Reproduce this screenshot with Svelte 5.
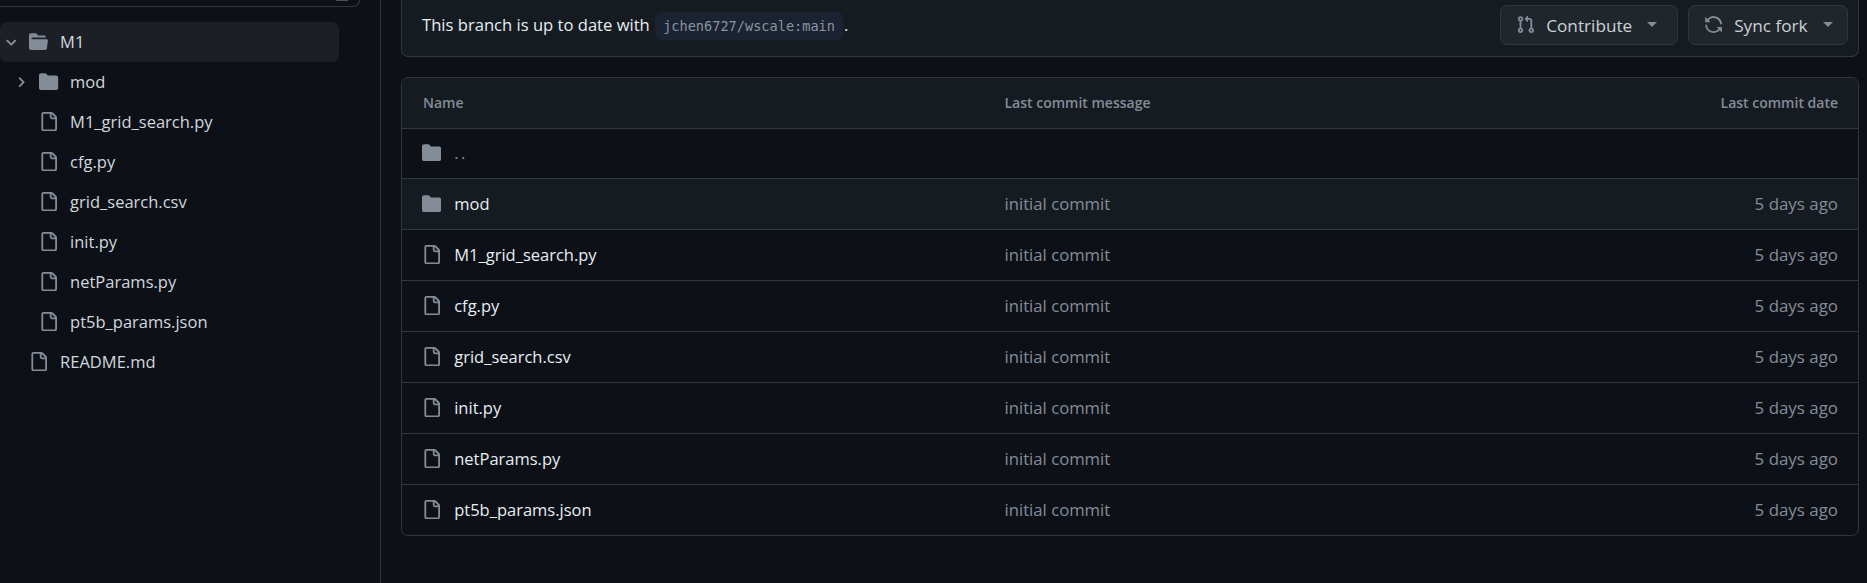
<script>
	const tree = [
		{ name: 'mod', type: 'dir' },
		{ name: 'M1_grid_search.py', type: 'file' },
		{ name: 'cfg.py', type: 'file' },
		{ name: 'grid_search.csv', type: 'file' },
		{ name: 'init.py', type: 'file' },
		{ name: 'netParams.py', type: 'file' },
		{ name: 'pt5b_params.json', type: 'file' }
	];

	const filePath =
		'M2 1.75C2 .784 2.784 0 3.75 0h6.586c.464 0 .909.184 1.237.513l2.914 2.914c.329.328.513.773.513 1.237v9.586A1.75 1.75 0 0 1 13.25 16h-9.5A1.75 1.75 0 0 1 2 14.25Zm1.75-.25a.25.25 0 0 0-.25.25v12.5c0 .138.112.25.25.25h9.5a.25.25 0 0 0 .25-.25V6h-2.75A1.75 1.75 0 0 1 9 4.25V1.5Zm6.75.062V4.25c0 .138.112.25.25.25h2.688l-.011-.013-2.914-2.914-.013-.011Z';
	const dirPath =
		'M1.75 1A1.75 1.75 0 0 0 0 2.75v10.5C0 14.216.784 15 1.75 15h12.5A1.75 1.75 0 0 0 16 13.25v-8.5A1.75 1.75 0 0 0 14.25 3H7.5a.25.25 0 0 1-.2-.1l-.9-1.2C6.07 1.26 5.55 1 5 1H1.75Z';
	const openPath =
		'M.513 1.513A1.75 1.75 0 0 1 1.75 1h3.5c.55 0 1.07.26 1.4.7l.9 1.2a.25.25 0 0 0 .2.1H13a1 1 0 0 1 1 1v.5H2.75a.75.75 0 0 0 0 1.5h11.978a1 1 0 0 1 .994 1.117L15 13.25A1.75 1.75 0 0 1 13.25 15H1.75A1.75 1.75 0 0 1 0 13.25V2.75c0-.464.184-.91.513-1.237Z';
	const prPath =
		'M1.5 3.25a2.25 2.25 0 1 1 3 2.122v5.256a2.251 2.251 0 1 1-1.5 0V5.372A2.25 2.25 0 0 1 1.5 3.25Zm5.677-.177L9.573.677A.25.25 0 0 1 10 .854V2.5h1A2.5 2.5 0 0 1 13.5 5v5.628a2.251 2.251 0 1 1-1.5 0V5a1 1 0 0 0-1-1h-1v1.646a.25.25 0 0 1-.427.177L7.177 3.427a.25.25 0 0 1 0-.354ZM3.75 2.5a.75.75 0 1 0 0 1.5.75.75 0 0 0 0-1.5Zm0 9.5a.75.75 0 1 0 0 1.5.75.75 0 0 0 0-1.5Zm8.25.75a.75.75 0 1 0 1.5 0 .75.75 0 0 0-1.5 0Z';
	const syncPath =
		'M1.705 8.005a.75.75 0 0 1 .834.656 5.5 5.5 0 0 0 9.592 2.97l-1.204-1.204a.25.25 0 0 1 .177-.427h3.646a.25.25 0 0 1 .25.25v3.646a.25.25 0 0 1-.427.177l-1.38-1.38A7.002 7.002 0 0 1 1.05 8.84a.75.75 0 0 1 .656-.834ZM8 2.5a5.487 5.487 0 0 0-4.131 1.869l1.204 1.204A.25.25 0 0 1 4.896 6H1.25A.25.25 0 0 1 1 5.75V2.104a.25.25 0 0 1 .427-.177l1.38 1.38A7.002 7.002 0 0 1 14.95 7.16a.75.75 0 0 1-1.49.178A5.5 5.5 0 0 0 8 2.5Z';
	const chevronRight =
		'M4.7 10c-.2 0-.4-.1-.5-.2-.3-.3-.3-.8 0-1.1L6.9 6 4.2 3.3c-.3-.3-.3-.8 0-1.1.3-.3.8-.3 1.1 0l3.3 3.2c.3.3.3.8 0 1.1L5.3 9.7c-.2.2-.4.3-.6.3Z';
	const chevronDown =
		'M6 8.825c-.2 0-.4-.1-.5-.2l-3.3-3.3c-.3-.3-.3-.8 0-1.1.3-.3.8-.3 1.1 0l2.7 2.7 2.7-2.7c.3-.3.8-.3 1.1 0 .3.3.3.8 0 1.1l-3.2 3.2c-.2.2-.4.3-.6.3Z';
</script>

{#snippet icon(d, cls = 'ico')}
	<svg class={cls} viewBox="0 0 16 16" aria-hidden="true"><path {d} /></svg>
{/snippet}

{#snippet chevron(d)}
	<svg class="chev" viewBox="0 0 12 12" aria-hidden="true"><path {d} /></svg>
{/snippet}

<div class="page">
	<aside class="sidebar">
		<div class="search"><span class="kbd"></span></div>
		<ul class="tree">
			<li class="node open">
				{@render chevron(chevronDown)}
				{@render icon(openPath)}
				<span>M1</span>
			</li>
			{#each tree as item}
				<li class="node nested">
					{#if item.type === 'dir'}
						{@render chevron(chevronRight)}
						{@render icon(dirPath)}
					{:else}
						<span class="chev"></span>
						{@render icon(filePath)}
					{/if}
					<span>{item.name}</span>
				</li>
			{/each}
			<li class="node">
				<span class="chev"></span>
				{@render icon(filePath)}
				<span>README.md</span>
			</li>
		</ul>
	</aside>

	<main class="main">
		<section class="status">
			<p>This branch is up to date with <code>jchen6727/wscale:main</code>.</p>
			<div class="actions">
				<button class="contribute">
					{@render icon(prPath)}
					<span>Contribute</span>
					<i class="caret"></i>
				</button>
				<button class="sync">
					{@render icon(syncPath)}
					<span>Sync fork</span>
					<i class="caret"></i>
				</button>
			</div>
		</section>

		<section class="files">
			<div class="row head">
				<div class="name">Name</div>
				<div class="msg">Last commit message</div>
				<div class="date">Last commit date</div>
			</div>
			<div class="row">
				<div class="name">
					{@render icon(dirPath)}
					<span class="up">..</span>
				</div>
			</div>
			{#each tree as item}
				<div class="row" class:hover={item.type === 'dir'}>
					<div class="name">
						{@render icon(item.type === 'dir' ? dirPath : filePath)}
						<span>{item.name}</span>
					</div>
					<div class="msg">initial commit</div>
					<div class="date">5 days ago</div>
				</div>
			{/each}
		</section>
	</main>
</div>

<style>
	:global(body) {
		background: #0d1117;
		overflow: hidden;
	}

	.page {
		display: flex;
		height: 583px;
		font-family: 'Open Sans', 'Noto Sans', sans-serif;
		font-size: 16.5px;
		color: #e6edf3;
	}

	.ico {
		width: 19.2px;
		height: 19.2px;
		flex: none;
		fill: #848d97;
	}

	/* left file tree */
	.sidebar {
		width: 381px;
		flex: none;
		box-sizing: border-box;
		border-right: 1px solid #30363d;
		padding-right: 20px;
	}

	.search {
		position: relative;
		height: 7px;
		margin-left: -10px;
		box-sizing: border-box;
		border: 1px solid #30363d;
		border-top: none;
		border-radius: 0 0 7px 7px;
	}

	.kbd {
		position: absolute;
		top: 0;
		right: 11px;
		width: 12px;
		height: 1px;
		background: #484f58;
	}

	.tree {
		list-style: none;
		margin: 15px 0 0;
		padding: 0;
		width: 339px;
		display: flex;
		flex-direction: column;
		gap: 0.4px;
	}

	.node {
		height: 39.6px;
		display: flex;
		align-items: center;
		gap: 10px;
		padding-left: 4px;
		border-radius: 7px;
		color: #d0d7de;
	}

	.node > span:last-child {
		margin-left: 1.5px;
	}

	.node.open {
		background: #1c2026;
	}

	.node.nested {
		padding-left: 14px;
	}

	.chev {
		width: 14.4px;
		height: 14.4px;
		flex: none;
		margin-right: 1px;
		fill: #848d97;
	}

	/* right side */
	.main {
		flex: 1;
		min-width: 0;
		padding: 0 8px 0 20px;
	}

	.status {
		height: 57px;
		box-sizing: border-box;
		display: flex;
		align-items: center;
		justify-content: space-between;
		padding: 0 10px 7px 20px;
		background: #161b22;
		border: 1px solid #30363d;
		border-top: none;
		border-radius: 0 0 7px 7px;
		font-size: 16.6px;
	}

	.status p {
		margin: 2px 0 0;
	}

	code {
		display: inline-block;
		height: 28px;
		line-height: 28px;
		margin: 0 1px 0 1px;
		padding: 0 8px;
		border-radius: 7px;
		background: #1b2333;
		color: #8b949e;
		font-family: 'DejaVu Sans Mono', monospace;
		font-size: 13.6px;
	}

	.actions {
		display: flex;
		gap: 10px;
	}

	button {
		height: 40px;
		box-sizing: border-box;
		display: flex;
		align-items: center;
		padding: 0;
		background: #21262d;
		border: 1px solid #30363d;
		border-radius: 7px;
		color: #c9d1d9;
		font: inherit;
		font-size: 17.2px;
		font-weight: 500;
	}

	.contribute {
		width: 178px;
		padding-left: 15px;
	}

	.sync {
		width: 160px;
		padding-left: 15px;
	}

	button span {
		margin-left: 11px;
		padding-top: 2px;
	}

	.caret {
		margin-left: 15px;
		border-top: 5px solid #848d97;
		border-left: 5px solid transparent;
		border-right: 5px solid transparent;
	}

	.files {
		margin-top: 20px;
		border: 1px solid #30363d;
		border-radius: 7px;
		overflow: hidden;
	}

	.row {
		height: 50.9px;
		box-sizing: border-box;
		display: grid;
		grid-template-columns: 582.5px 1fr 200px;
		align-items: center;
		padding: 0 20px 1px;
		border-top: 1px solid #30363d;
	}

	.row.head {
		height: 49.55px;
		padding-bottom: 0;
		border-top: none;
		background: #161b22;
		color: #848d97;
		font-size: 14px;
		font-weight: 600;
	}

	.row.head .name {
		padding-left: 1px;
	}

	.row.hover {
		background: #161b22;
	}

	.name {
		display: flex;
		align-items: center;
		gap: 13px;
	}

	.msg {
		color: #848d97;
		font-size: 16.7px;
	}

	.row.head .msg,
	.row.head .date {
		font-size: 14px;
	}

	.date {
		text-align: right;
		color: #848d97;
		font-size: 16.9px;
	}

	.up {
		color: #848d97;
		letter-spacing: 2.5px;
	}
</style>
